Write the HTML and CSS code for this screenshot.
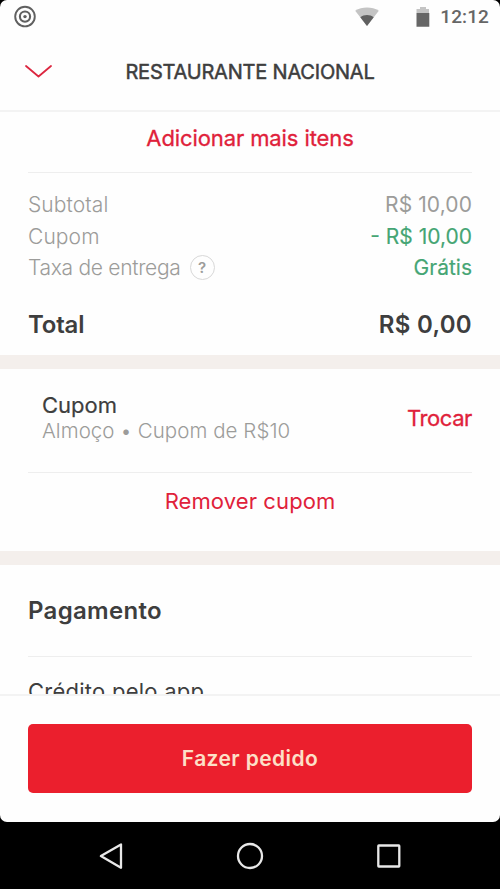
FILE: index.html
```
<!DOCTYPE html>
<html lang="pt-BR">
<head>
<meta charset="utf-8">
<title>Restaurante Nacional</title>
<link rel="stylesheet" href="styles.css">
</head>
<body>
<div class="screen">
  <div class="statusbar">
    <svg class="target" width="24" height="24" viewBox="0 0 24 24" fill="none" stroke="#606060">
      <circle cx="12" cy="11.6" r="9.8" stroke-width="1.9"/>
      <circle cx="12" cy="11.6" r="5.1" stroke-width="2.1"/>
      <circle cx="12" cy="11.6" r="1.7" fill="#606060" stroke="none"/>
    </svg>
    <svg class="wifi" width="26" height="22" viewBox="0 0 26 22">
      <path d="M1.2 4.7C8 .4 18 .4 24.8 4.7L13 20Z" fill="#c4c4c4"/>
      <path d="M6.3 11.2C10 8.2 16 8.2 19.7 11.2L13 20Z" fill="#606060"/>
    </svg>
    <svg class="battery" width="14" height="20" viewBox="0 0 14 20">
      <path d="M4 0H10V2H13V6H.5V2H4Z" fill="#c4c4c4"/>
      <path d="M.5 6H13.3V19.8H.5Z" fill="#666"/>
    </svg>
    <span class="clock">12:12</span>
  </div>
  <header class="header">
    <svg class="chevron" width="28" height="14" viewBox="0 0 28 14" fill="none" stroke="#dc2740" stroke-width="1.8" stroke-linecap="round" stroke-linejoin="round"><path d="M2 1L14.5 11.5L27 1"/></svg>
    <h1 class="title">RESTAURANTE NACIONAL</h1>
  </header>
  <main class="content">
    <section class="summary">
      <a class="link add">Adicionar mais itens</a>
      <div class="rows">
        <div class="row"><span>Subtotal</span><span class="value">R$ 10,00</span></div>
        <div class="row"><span>Cupom</span><span class="value green">- R$ 10,00</span></div>
        <div class="row"><span class="fee">Taxa de entrega</span><span class="help">?</span><span class="value green">Grátis</span></div>
      </div>
      <div class="total"><span class="total-label">Total</span><span>R$ 0,00</span></div>
    </section>
    <section class="coupon">
      <div class="coupon-info">
        <div>
          <div class="coupon-name">Cupom</div>
          <div class="coupon-desc">Almoço • Cupom de R$10</div>
        </div>
        <a class="link change">Trocar</a>
      </div>
      <a class="link remove">Remover cupom</a>
    </section>
    <section class="payment">
      <h2 class="payment-title">Pagamento</h2>
      <div class="method">Crédito pelo app</div>
    </section>
  </main>
  <footer class="footer"><button class="order">Fazer pedido</button></footer>
</div>
<nav class="navbar">
  <svg width="28" height="28" viewBox="0 0 28 28"><path d="M3.9 14L24 2.4V25.8Z"/></svg>
  <svg width="28" height="28" viewBox="0 0 28 28"><circle cx="14" cy="14" r="12"/></svg>
  <svg width="28" height="28" viewBox="0 0 28 28"><rect x="3.3" y="3.5" width="21" height="21" rx=".5"/></svg>
</nav>
</body>
</html>
```
FILE: styles.css
```
* { box-sizing: border-box; }
body {
  margin: 0;
  height: 889px;
  overflow: hidden;
  display: flex;
  flex-direction: column;
  background: #000;
  color: #3e3e3e;
  font-family: Inter, "Liberation Sans", sans-serif;
}
h1, h2 { margin: 0; }
.screen {
  height: 822px;
  display: flex;
  flex-direction: column;
  background: #fefefe;
  border-radius: 7px;
  overflow: hidden;
}
.statusbar {
  height: 34px;
  flex: none;
  display: flex;
  align-items: center;
  padding: 0 11px 0 13px;
}
.target { margin-right: auto; }
.wifi { margin-right: 36px; }
.battery { margin-right: 10px; }
.clock {
  font: 500 19px/34px Roboto, sans-serif;
  color: #666;
  letter-spacing: 0.1px;
}
.header {
  height: 78px;
  flex: none;
  display: grid;
  grid-template-columns: 74px 1fr 74px;
  align-items: center;
  border-bottom: 2px solid #f3f3f3;
}
.chevron { margin-left: 24px; }
.title {
  text-align: center;
  font-size: 20px;
  font-weight: 400;
  letter-spacing: -0.2px;
  -webkit-text-stroke: 0.5px;
}
.content { height: 582px; flex: none; overflow: hidden; }
.link {
  display: block;
  color: #e0213a;
  font-size: 22px;
  -webkit-text-stroke: 0.3px;
}
.summary { height: 257px; padding: 0 28px; border-bottom: 14px solid #f4efec; }
.add {
  height: 61px;
  line-height: 52px;
  text-align: center;
  letter-spacing: -0.1px;
  border-bottom: 1px solid #eee;
}
.rows { padding-top: 16px; }
.row {
  height: 31.4px;
  display: flex;
  align-items: center;
  color: #9c9c9a;
  font-size: 21px;
  font-weight: 300;
  letter-spacing: 0.1px;
}
.fee { letter-spacing: -0.3px; }
.value { margin-left: auto; font-weight: 400; }
.green { color: #45a574; letter-spacing: 0; -webkit-text-stroke: 0.15px; }
.help {
  width: 25px;
  height: 25px;
  margin-left: 9px;
  border: 1.5px solid #d8d8d8;
  border-radius: 50%;
  font-size: 15px;
  font-weight: 600;
  line-height: 23px;
  text-align: center;
}
.total {
  display: flex;
  justify-content: space-between;
  margin-top: 26px;
  font-size: 24px;
  font-weight: 600;
  line-height: 32px;
  letter-spacing: 0.3px;
}
.total-label { letter-spacing: -0.2px; }
.coupon { height: 196px; padding: 0 28px; border-bottom: 14px solid #f4efec; }
.coupon-info {
  height: 104px;
  padding: 23px 0 0 14px;
  display: flex;
  justify-content: space-between;
  align-items: flex-start;
  line-height: 26px;
  border-bottom: 1px solid #eee;
}
.change { margin-top: 13px; letter-spacing: -0.4px; }
.coupon-name { font-size: 22px; letter-spacing: 0; -webkit-text-stroke: 0.2px; }
.coupon-desc { color: #9c9c9a; font-size: 20.5px; font-weight: 300; letter-spacing: 0.05px; }
.remove {
  line-height: 56px;
  text-align: center;
  letter-spacing: 0.1px;
  -webkit-text-stroke: 0;
}
.payment { padding: 0 28px; }
.payment-title {
  height: 92px;
  line-height: 92px;
  font-size: 24px;
  font-weight: 600;
  letter-spacing: 0.3px;
  border-bottom: 1px solid #eee;
}
.method { line-height: 68px; font-size: 22px; letter-spacing: 0.25px; }
.footer {
  flex: 1;
  padding: 28px 28px 0;
  border-top: 2px solid #f3f3f3;
}
.order {
  display: block;
  width: 100%;
  height: 69px;
  padding: 0;
  border: 0;
  border-radius: 5px;
  background: #eb1f2d;
  color: #fde0c8;
  font: 600 21px/69px Inter, sans-serif;
  letter-spacing: 0.4px;
}
.navbar {
  height: 67px;
  display: flex;
  justify-content: space-between;
  align-items: center;
  padding: 0 97px;
}
.navbar svg { fill: none; stroke: #e8e8e8; stroke-width: 2.3; stroke-linejoin: round; }
```
